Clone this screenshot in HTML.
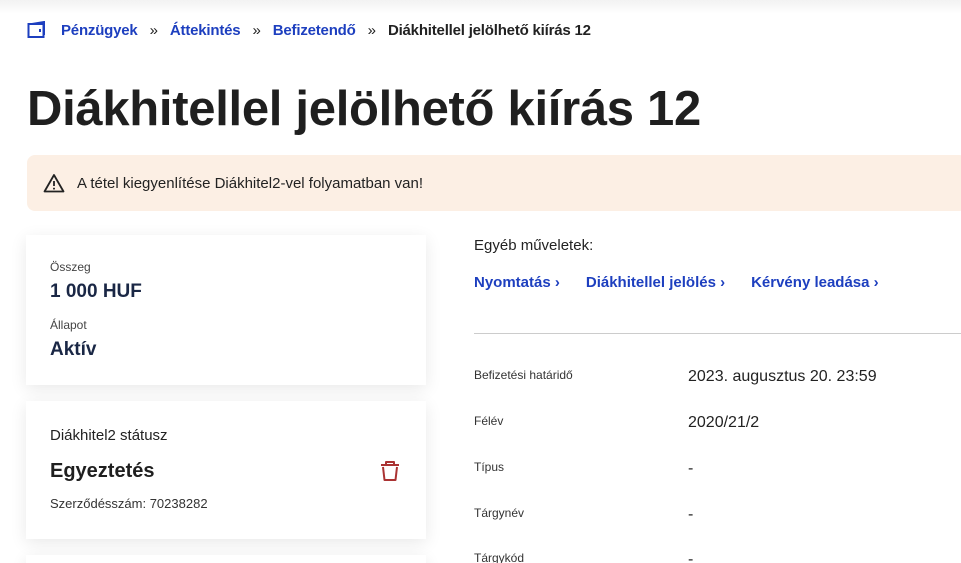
<!DOCTYPE html>
<html><head><meta charset="utf-8"><style>
*{margin:0;padding:0;box-sizing:border-box}
html,body{width:961px;height:563px;overflow:hidden}
body{background:#fff;font-family:"Liberation Sans",sans-serif;color:#222;position:relative}
.top{position:absolute;left:0;top:0;width:961px;height:14px;background:linear-gradient(#f2f2f2,#fff)}
.bc{position:absolute;left:27px;top:21px;font-size:15px;display:flex;align-items:center;white-space:nowrap}
.bc a{color:#1d3fbf;text-decoration:none;font-weight:bold;letter-spacing:-0.2px}
.bc .s{margin:0 12px;color:#222}
.bc b{letter-spacing:-0.2px}
h1{position:absolute;left:27px;top:81px;font-size:49px;font-weight:bold;letter-spacing:-0.3px;color:#1f1f1f;white-space:nowrap}
.alert{position:absolute;left:27px;top:155px;width:940px;height:56px;background:#fcefe4;border-radius:8px;font-size:15px;display:flex;align-items:center;padding-left:16px}
.alert span{margin-left:12px;color:#222}
.card{position:absolute;left:26px;width:400px;background:#fff;box-shadow:0 4px 16px rgba(0,0,0,.09)}
.lab{font-size:12px;color:#444}
.val{font-size:19px;font-weight:bold;color:#1a2745}
.r{position:absolute;left:474px}
.links a{color:#1d3fbf;font-weight:bold;font-size:15px;text-decoration:none;margin-right:26px}
.row{position:absolute;left:474px;font-size:12px;color:#333}
.row span{position:absolute;left:214px;top:0px;font-size:16px;color:#222;white-space:nowrap}
</style></head><body>
<div class="top"></div>
<div class="bc">
<svg width="20" height="18" viewBox="0 0 20 18" style="margin-right:14px"><rect x="1.5" y="3" width="15" height="13" fill="none" stroke="#1d3fbf" stroke-width="2"/><path d="M5 3 L17 1 L17 14" fill="none" stroke="#1d3fbf" stroke-width="2"/><rect x="12" y="8" width="2" height="3" fill="#1d3fbf"/></svg>
<a>Pénzügyek</a><span class="s">»</span><a>Áttekintés</a><span class="s">»</span><a>Befizetendő</a><span class="s">»</span><b>Diákhitellel jelölhető kiírás 12</b></div>
<h1>Diákhitellel jelölhető kiírás 12</h1>
<div class="alert"><svg width="22" height="20" viewBox="0 0 22 20"><path d="M11 2 L20.5 18.5 L1.5 18.5 Z" fill="none" stroke="#222" stroke-width="1.8" stroke-linejoin="round"/><path d="M11 8 V13" stroke="#222" stroke-width="1.8"/><circle cx="11" cy="15.6" r="1" fill="#222"/></svg><span>A tétel kiegyenlítése Diákhitel2-vel folyamatban van!</span></div>

<div class="card" style="top:235px;height:150px">
<div class="lab" style="position:absolute;left:24px;top:25px">Összeg</div>
<div class="val" style="position:absolute;left:24px;top:46px">1 000 HUF</div>
<div class="lab" style="position:absolute;left:24px;top:83px">Állapot</div>
<div class="val" style="position:absolute;left:24px;top:104px">Aktív</div>
</div>
<div class="card" style="top:401px;height:138px">
<div style="position:absolute;left:24px;top:26px;font-size:15px;color:#222">Diákhitel2 státusz</div>
<div style="position:absolute;left:24px;top:59px;font-size:20px;font-weight:bold;color:#1f1f1f">Egyeztetés</div>
<div style="position:absolute;left:24px;top:95px;font-size:13px;color:#333">Szerződésszám: 70238282</div>
<svg style="position:absolute;left:353px;top:57px" width="22" height="24" viewBox="0 0 22 24"><path d="M2 7 H20 M7 7 V4 H15 V7 M4 9 L5.5 22 H16.5 L18 9" fill="none" stroke="#a33" stroke-width="2" stroke-linejoin="round"/></svg>
</div>
<div class="card" style="top:555px;height:30px"></div>

<div class="r" style="top:237px;font-size:15px;color:#222">Egyéb műveletek:</div>
<div class="r links" style="top:274px"><a>Nyomtatás ›</a><a>Diákhitellel jelölés ›</a><a>Kérvény leadása ›</a></div>
<div class="r" style="top:333px;width:500px;border-top:1px solid #ccc"></div>
<div class="row" style="top:368px">Befizetési határidő<span>2023. augusztus 20. 23:59</span></div>
<div class="row" style="top:414px">Félév<span>2020/21/2</span></div>
<div class="row" style="top:460px">Típus<span>-</span></div>
<div class="row" style="top:506px">Tárgynév<span>-</span></div>
<div class="row" style="top:551px">Tárgykód<span>-</span></div>
</body></html>
